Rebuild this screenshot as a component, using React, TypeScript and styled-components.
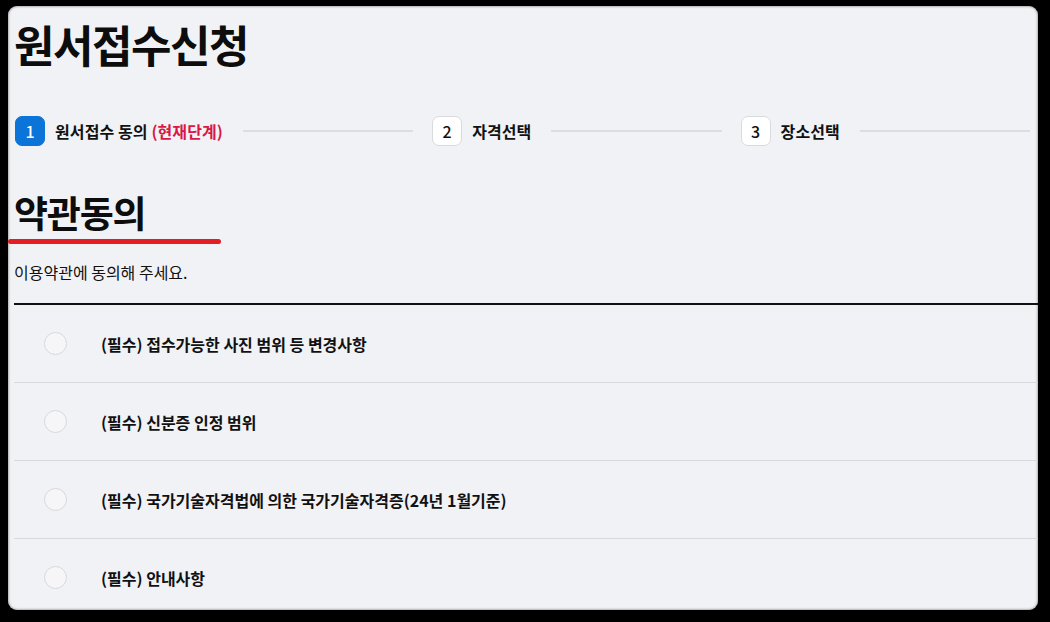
import React from 'react';
import styled, { createGlobalStyle } from 'styled-components';

const GlobalStyle = createGlobalStyle`
    html, body {
        margin: 0;
        padding: 0;
        background: #000;
    }
    body {
        font-family: 'Noto Sans CJK KR', 'Noto Sans', sans-serif;
        color: #111;
    }
    * { box-sizing: border-box; }
`;

const Frame = styled.div`
    width: 1050px;
    height: 622px;
    padding: 6px 12px 12px 8px;
    background: #000;
`;

const Panel = styled.main`
    width: 1030px;
    height: 604px;
    overflow: hidden;
    border-radius: 9px;
    background: #f1f2f6;
    box-shadow: inset 0 0 2px 1px rgba(120, 120, 120, 0.55);
    padding: 14px 0 0 6px;
`;

const Title = styled.h1`
    margin: 0;
    font-size: 44px;
    line-height: 48px;
    font-weight: 700;
    letter-spacing: -1.5px;
    color: #0d0d0d;
`;

const Steps = styled.ol`
    list-style: none;
    margin: 48px 0 0;
    padding: 0 8px 0 1px;
    display: flex;
    align-items: center;
`;

const Step = styled.li`
    display: flex;
    align-items: center;
    gap: 10px;
    flex: 1 1 auto;
    &:not(:last-child) { margin-right: 19px; }
`;

const StepNum = styled.span<{ $active?: boolean }>`
    width: 30px;
    height: 30px;
    flex: none;
    display: flex;
    align-items: center;
    justify-content: center;
    border-radius: 7px;
    font-size: 16px;
    font-weight: 500;
    background: ${({ $active }) => ($active ? '#0a74d8' : '#fff')};
    color: ${({ $active }) => ($active ? '#fff' : '#111')};
    border: 1px solid ${({ $active }) => ($active ? '#0a74d8' : '#d9dade')};
`;

const StepLabel = styled.span`
    font-size: 16px;
    font-weight: 700;
    letter-spacing: 0.1px;
    white-space: nowrap;
    color: #111;

    em {
        font-style: normal;
        color: #d81845;
    }
`;

const StepLine = styled.span`
    flex: 1 1 0;
    height: 2px;
    margin-left: 10px;
    background: #dcdde2;
`;

const Heading = styled.h2`
    margin: 44px 0 0;
    font-size: 37px;
    line-height: 44px;
    font-weight: 700;
    letter-spacing: -1.2px;
    color: #0d0d0d;
`;

const Underline = styled.div`
    width: 213px;
    height: 5px;
    margin: 5px 0 0 -6px;
    border-radius: 3px;
    background: #e31e24;
`;

const Lead = styled.p`
    margin: 17px 0 0;
    font-size: 16px;
    line-height: 22px;
    color: #111;
`;

const TermList = styled.ul`
    list-style: none;
    margin: 20px 0 0;
    padding: 0;
    border-top: 2px solid #111;
`;

const TermRow = styled.li`
    height: 78px;
    display: flex;
    align-items: center;
    padding-left: 30px;
    border-bottom: 1px solid #d8d9de;
`;

const Radio = styled.span`
    width: 23px;
    height: 23px;
    flex: none;
    border-radius: 50%;
    border: 1.5px solid #d7d8dc;
    background: #f6f6f8;
`;

const TermText = styled.span`
    margin-left: 34px;
    font-size: 16px;
    font-weight: 700;
    color: #111;
`;

const steps = [
    { num: 1, label: '원서접수 동의', current: true },
    { num: 2, label: '자격선택' },
    { num: 3, label: '장소선택' },
];

const terms = [
    '(필수) 접수가능한 사진 범위 등 변경사항',
    '(필수) 신분증 인정 범위',
    '(필수) 국가기술자격법에 의한 국가기술자격증(24년 1월기준)',
    '(필수) 안내사항',
];

const App: React.FC = () => {
    return (
        <>
            <GlobalStyle />
            <Frame>
                <Panel>
                    <Title>원서접수신청</Title>
                    <Steps>
                        {steps.map(s => (
                            <Step key={s.num}>
                                <StepNum $active={s.current}>{s.num}</StepNum>
                                <StepLabel>
                                    {s.label}
                                    {s.current && <> <em>(현재단계)</em></>}
                                </StepLabel>
                                <StepLine />
                            </Step>
                        ))}
                    </Steps>
                    <Heading>약관동의</Heading>
                    <Underline />
                    <Lead>이용약관에 동의해 주세요.</Lead>
                    <TermList>
                        {terms.map(t => (
                            <TermRow key={t}>
                                <Radio />
                                <TermText>{t}</TermText>
                            </TermRow>
                        ))}
                    </TermList>
                </Panel>
            </Frame>
        </>
    );
};

export default App;
